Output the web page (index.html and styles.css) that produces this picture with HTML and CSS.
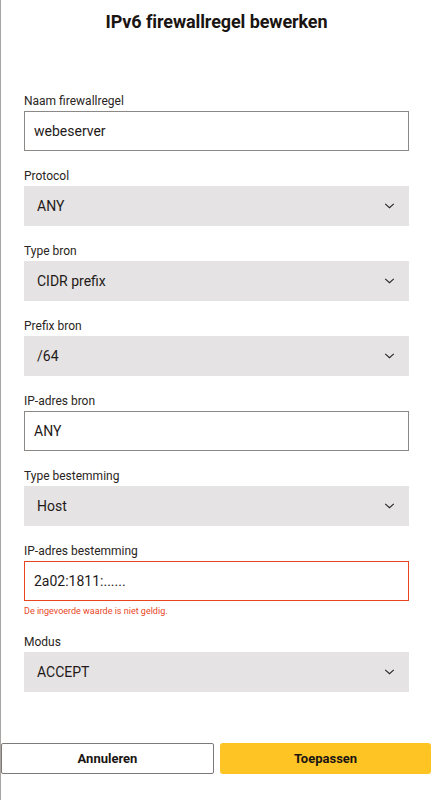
FILE: index.html
```html
<!DOCTYPE html>
<html lang="nl">
<head>
<meta charset="utf-8">
<title>IPv6 firewallregel bewerken</title>
<link rel="stylesheet" href="styles.css">
</head>
<body>
<div class="page">
  <h1 class="title">IPv6 firewallregel bewerken</h1>
  <form class="form">
    <div class="field">
      <label class="label">Naam firewallregel</label>
      <div class="input">webeserver</div>
    </div>
    <div class="field">
      <label class="label">Protocol</label>
      <div class="select"><span>ANY</span><svg class="chev" viewBox="0 0 12 7" width="12" height="7"><path d="M1 1l5 4.5L11 1" fill="none" stroke="#222" stroke-width="1.2"/></svg></div>
    </div>
    <div class="field">
      <label class="label">Type bron</label>
      <div class="select"><span>CIDR prefix</span><svg class="chev" viewBox="0 0 12 7" width="12" height="7"><path d="M1 1l5 4.5L11 1" fill="none" stroke="#222" stroke-width="1.2"/></svg></div>
    </div>
    <div class="field">
      <label class="label">Prefix bron</label>
      <div class="select"><span>/64</span><svg class="chev" viewBox="0 0 12 7" width="12" height="7"><path d="M1 1l5 4.5L11 1" fill="none" stroke="#222" stroke-width="1.2"/></svg></div>
    </div>
    <div class="field">
      <label class="label">IP-adres bron</label>
      <div class="input">ANY</div>
    </div>
    <div class="field">
      <label class="label">Type bestemming</label>
      <div class="select"><span>Host</span><svg class="chev" viewBox="0 0 12 7" width="12" height="7"><path d="M1 1l5 4.5L11 1" fill="none" stroke="#222" stroke-width="1.2"/></svg></div>
    </div>
    <div class="field field-error">
      <label class="label">IP-adres bestemming</label>
      <div class="input input-error">2a02:1811:......</div>
      <div class="error">De ingevoerde waarde is niet geldig.</div>
    </div>
    <div class="field">
      <label class="label">Modus</label>
      <div class="select"><span>ACCEPT</span><svg class="chev" viewBox="0 0 12 7" width="12" height="7"><path d="M1 1l5 4.5L11 1" fill="none" stroke="#222" stroke-width="1.2"/></svg></div>
    </div>
  </form>
  <div class="actions">
    <button class="btn btn-cancel" type="button">Annuleren</button>
    <button class="btn btn-apply" type="button">Toepassen</button>
  </div>
</div>
</body>
</html>
```
FILE: styles.css
```css
* { box-sizing: border-box; }
html, body { margin: 0; padding: 0; background: #fff; }
body {
  font-family: Roboto, "Liberation Sans", sans-serif;
  color: #1f1a18;
}
.page {
  border-left: 1px solid #a9a5a2;
  min-height: 800px;
  width: 432px;
  display: flex;
  flex-direction: column;
}
.title {
  margin: 0;
  padding-top: 11px;
  height: 91px;
  font-size: 18px;
  font-weight: 700;
  text-align: center;
  letter-spacing: -0.1px;
  line-height: 22px;
  color: #1a1513;
}
.form {
  padding: 0 23px;
  display: flex;
  flex-direction: column;
}
.field {
  display: flex;
  flex-direction: column;
  margin-bottom: 15px;
}
.label {
  font-size: 12px;
  line-height: 20px;
  height: 20px;
  color: #2a2522;
}
.input {
  height: 40px;
  border: 1px solid #8c8886;
  display: flex;
  align-items: center;
  padding-left: 9px;
  font-size: 14px;
  color: #1f1a18;
}
.input-error {
  border: 1.5px solid #e8461f;
}
.error {
  font-size: 9px;
  line-height: 15px;
  height: 16px;
  padding-top: 3px;
  color: #e8461f;
}
.select {
  height: 40px;
  background: #e5e3e3;
  display: flex;
  align-items: center;
  justify-content: space-between;
  padding: 0 14px 0 13px;
  font-size: 14px;
  color: #1f1a18;
}
.chev { display: block; width: 11px; height: 6px; }
.actions {
  margin-top: 36px;
  display: flex;
  gap: 6px;
  padding-right: 1px;
}
.btn {
  flex: 1;
  height: 31px;
  font-family: Roboto, "Liberation Sans", sans-serif;
  font-size: 13px;
  font-weight: 700;
  color: #1a1513;
  cursor: pointer;
}
.btn-cancel {
  background: #fff;
  border: 1.5px solid #7d7977;
  border-radius: 2px;
}
.btn-apply {
  background: #fec423;
  border: none;
  border-radius: 3px;
}
```
